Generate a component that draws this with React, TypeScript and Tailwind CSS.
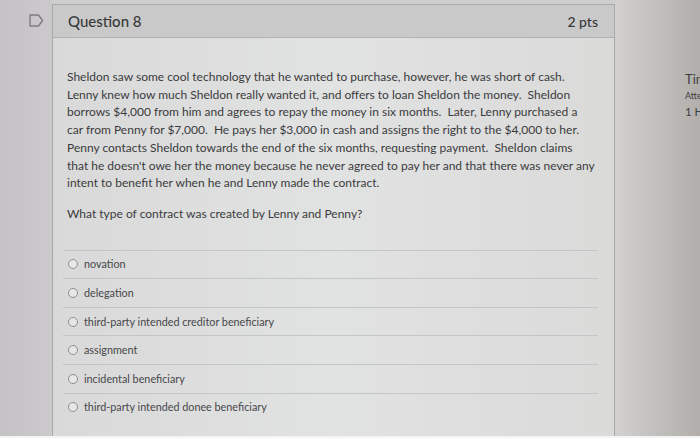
import React from 'react';

const storyLines = [
  'Sheldon saw some cool technology that he wanted to purchase, however, he was short of cash.',
  'Lenny knew how much Sheldon really wanted it, and offers to loan Sheldon the money.  Sheldon',
  'borrows $4,000 from him and agrees to repay the money in six months.  Later, Lenny purchased a',
  'car from Penny for $7,000.  He pays her $3,000 in cash and assigns the right to the $4,000 to her.',
  'Penny contacts Sheldon towards the end of the six months, requesting payment.  Sheldon claims',
  "that he doesn't owe her the money because he never agreed to pay her and that there was never any",
  'intent to benefit her when he and Lenny made the contract.',
];

const answers = [
  'novation',
  'delegation',
  'third-party intended creditor beneficiary',
  'assignment',
  'incidental beneficiary',
  'third-party intended donee beneficiary',
];

function FlagIcon() {
  return (
    <svg width="15" height="13" viewBox="0 0 15 13" fill="none">
      <path
        d="M1 1H9.5L13.5 6.5L9.5 12H1Z"
        stroke="#7d7c80"
        strokeWidth="1.4"
        strokeLinejoin="round"
      />
    </svg>
  );
}

function AnswerRow({ label }: { label: string }) {
  return (
    <label className="flex items-center h-[28.6px] border-t border-[#c4c6c6] pl-[5px]">
      <span className="w-[10px] h-[10px] rounded-full border border-[#8d8f90] bg-[#e6e7e7] shrink-0" />
      <span className="ml-[6px] text-[10.8px] text-[#47474a]">{label}</span>
    </label>
  );
}

export default function App() {
  return (
    <div
      className="w-[700px] h-[438px] overflow-hidden flex flex-col bg-white"
      style={{ fontFamily: 'Lato, "Open Sans", sans-serif' }}
    >
      <div className="h-[436px] flex bg-[#cfcecf]">
        {/* Left gutter with flag */}
        <div className="w-[52px] shrink-0 bg-linear-to-r from-[#c4c2c5] to-[#cbc9cb] pt-[14px] pl-[29px]">
          <FlagIcon />
        </div>

        {/* Question card */}
        <div className="w-[563px] shrink-0 mt-[4px] flex flex-col border-t border-l border-r border-[#a9a9aa] bg-linear-to-r from-[#d9d9d9] via-[#e1e2e2] to-[#dadad9]">
          <div className="h-[33px] flex items-center justify-between pl-[15px] pr-[16px] bg-[#c9c9c9] border-b border-[#b2b2b3]">
            <span className="text-[15px] text-[#3a3a3c] font-medium">Question 8</span>
            <span className="text-[14px] text-[#3a3a3c] font-medium">2 pts</span>
          </div>

          <div className="pt-[30px] pl-[14px] pr-[6px] text-[12px] leading-[17.7px] text-[#3b3b3d]">
            {storyLines.map((line) => (
              <div key={line} className="whitespace-pre">
                {line}
              </div>
            ))}
            <div className="mt-[13px]">What type of contract was created by Lenny and Penny?</div>
          </div>

          <div className="mt-[27px] ml-[10px] mr-[16px]">
            {answers.map((a) => (
              <AnswerRow key={a} label={a} />
            ))}
          </div>
        </div>

        {/* Right sidebar, cut off by the window edge */}
        <div className="flex-1 overflow-hidden bg-linear-to-r from-[#d2d1cf] to-[#b1aeab] pt-[71px] pl-[70px] text-[#3d3d3f]">
          <div className="text-[13px] leading-[17px] whitespace-nowrap">Time Running:</div>
          <div className="text-[9px] leading-[14px] whitespace-nowrap mt-[1px]">Attempt due</div>
          <div className="text-[11.5px] leading-[18px] whitespace-nowrap">1 Hour</div>
        </div>
      </div>
      <div className="h-[2px] bg-[#f4f4f4]" />
    </div>
  );
}
